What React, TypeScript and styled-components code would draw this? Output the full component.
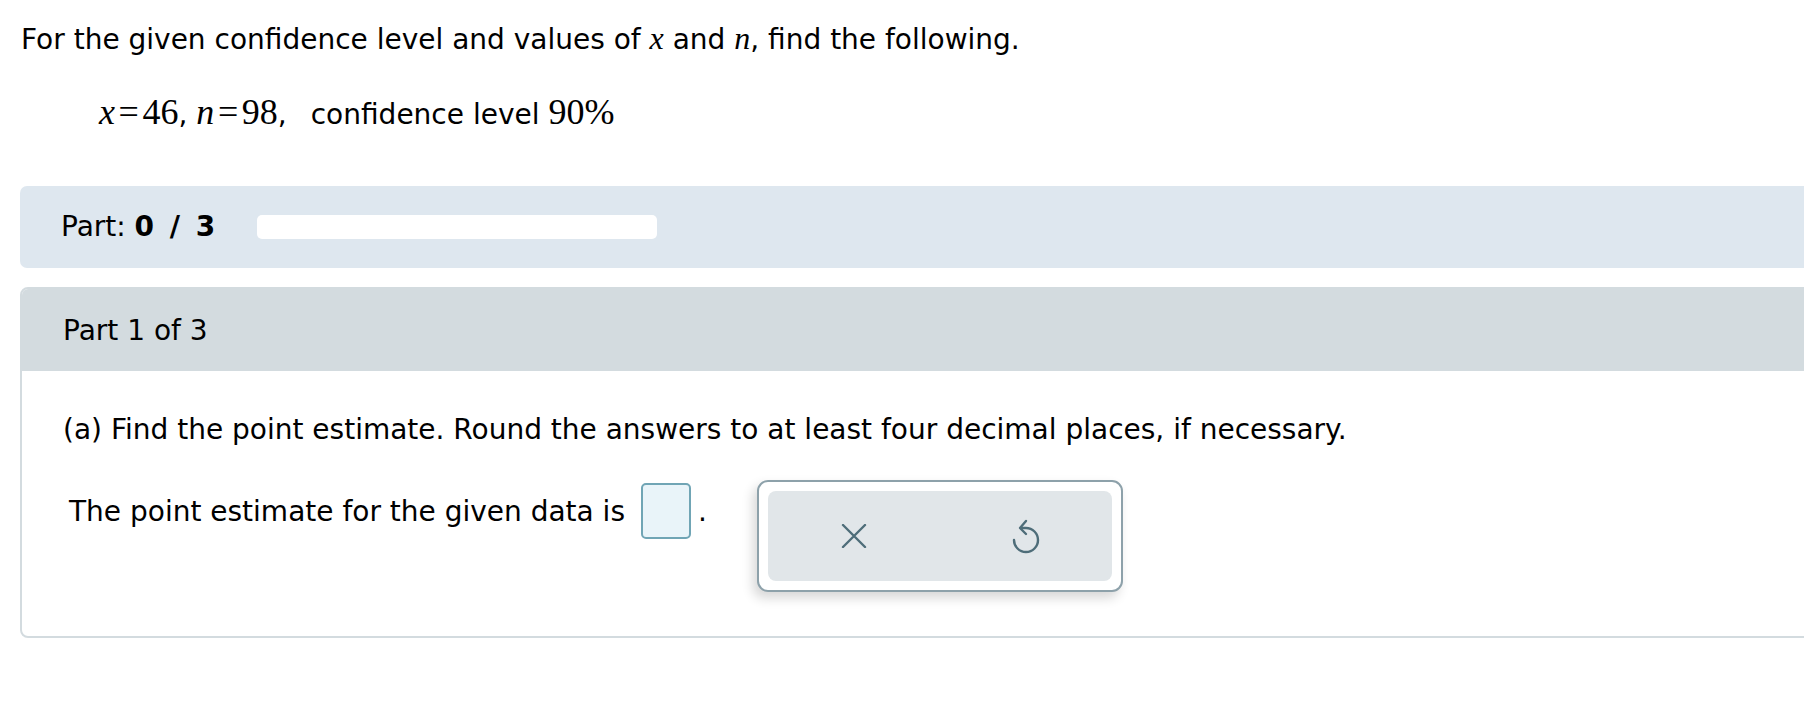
import React from "react";
import styled, { createGlobalStyle } from "styled-components";

const Global = createGlobalStyle`
  html, body { margin: 0; padding: 0; background: #ffffff; overflow: hidden; }
  body { font-family: "DejaVu Sans", Verdana, sans-serif; color: #000000; }
`;

const Page = styled.div`
  width: 1804px;
  box-sizing: border-box;
  padding: 22px 0 40px 20px;
  font-size: 28px;
`;

const Headline = styled.p`
  margin: 0;
  padding-left: 1px;
  height: 36px;
  line-height: 36px;
`;

const MathLine = styled.p`
  margin: 36px 0 0;
  padding-left: 79px;
  height: 40px;
  line-height: 40px;
`;

const Serif = styled.span<{ $italic?: boolean; $size?: number }>`
  font-family: "Liberation Serif", "Times New Roman", serif;
  font-size: ${(p) => p.$size ?? 31}px;
  font-style: ${(p) => (p.$italic ? "italic" : "normal")};
  line-height: 1;
`;

const Op = styled.span`
  font-family: "Liberation Serif", "Times New Roman", serif;
  font-size: 36px;
  line-height: 1;
  padding: 0 0.1em;
`;

const Words = styled.span`
  margin-left: 24px;
`;

const ProgressPanel = styled.section`
  margin: 52px -24px 0 0;
  height: 82px;
  background: #dee7ef;
  border-radius: 7px;
  display: flex;
  align-items: center;
  padding-left: 41px;
`;

const ProgressLabel = styled.div`
  line-height: 36px;
  white-space: pre;
`;

const Bold = styled.b`
  font-weight: 700;
  letter-spacing: 3px;
`;

const Bar = styled.div`
  margin-left: 39px;
  width: 400px;
  height: 24px;
  background: #ffffff;
  border-radius: 5px;
`;

const Card = styled.section`
  margin: 19px -24px 0 0;
  border: 2px solid #d3dbdf;
  border-radius: 8px;
  overflow: hidden;
`;

const CardHeader = styled.div`
  height: 82px;
  background: #d3dbdf;
  display: flex;
  align-items: center;
  padding-left: 41px;
`;

const CardBody = styled.div`
  padding: 41px 0 44px 41px;
`;

const Prompt = styled.p`
  margin: 0;
  line-height: 36px;
`;

const AnswerRow = styled.div`
  margin-top: 32px;
  display: flex;
  align-items: flex-start;
`;

const Question = styled.div`
  margin-top: 3px;
  padding-left: 6px;
  height: 56px;
  display: flex;
  align-items: center;
`;

const InputBox = styled.div`
  margin-left: 16px;
  width: 50px;
  height: 56px;
  box-sizing: border-box;
  border: 2px solid #70a5b5;
  background: #e9f4f9;
  border-radius: 5px;
`;

const Period = styled.span`
  margin-left: 7px;
`;

const ActionPanel = styled.div`
  margin-left: 50px;
  width: 366px;
  height: 112px;
  box-sizing: border-box;
  border: 2px solid #8da1aa;
  border-radius: 11px;
  padding: 9px;
  background: #ffffff;
  box-shadow: -4px 6px 12px rgba(0, 0, 0, 0.16);
`;

const ActionInner = styled.div`
  height: 100%;
  background: #e1e6e9;
  border-radius: 8px;
  display: grid;
  grid-template-columns: 1fr 1fr;
  align-items: center;
  justify-items: center;
`;

const IconButton = styled.button`
  border: 0;
  background: transparent;
  padding: 0;
  display: flex;
  align-items: center;
  justify-content: center;
  color: #4e6d79;
  cursor: pointer;
`;

const CloseIcon = () => (
  <svg width="26" height="24" viewBox="0 0 26 24" fill="none">
    <path d="M2 1 L24 23 M24 1 L2 23" stroke="currentColor" strokeWidth="2.4" strokeLinecap="round" />
  </svg>
);

const UndoIcon = () => (
  <svg width="28" height="35" viewBox="0 0 28 35" fill="none">
    <path
      d="M9 9 H14 A12 12 0 1 1 2 21"
      stroke="currentColor"
      strokeWidth="2.4"
      strokeLinecap="round"
      strokeLinejoin="round"
    />
    <path d="M14 2 L8 9 L14 15" stroke="currentColor" strokeWidth="2.4" strokeLinecap="round" strokeLinejoin="round" />
  </svg>
);

export default function App() {
  return (
    <>
      <Global />
      <Page>
        <Headline>
          For the given confidence level and values of <Serif $italic $size={32}>x</Serif> and{" "}
          <Serif $italic $size={32}>n</Serif>, find the following.
        </Headline>
        <MathLine>
          <Serif $italic $size={36}>x</Serif>
          <Op>=</Op>
          <Serif $size={36}>46</Serif>, <Serif $italic $size={36}>n</Serif>
          <Op>=</Op>
          <Serif $size={36}>98</Serif>,<Words>confidence level</Words> <Serif $size={36}>90%</Serif>
        </MathLine>
        <ProgressPanel>
          <ProgressLabel>
            Part: <Bold>0 / 3</Bold>
          </ProgressLabel>
          <Bar />
        </ProgressPanel>
        <Card>
          <CardHeader>Part 1 of 3</CardHeader>
          <CardBody>
            <Prompt>(a) Find the point estimate. Round the answers to at least four decimal places, if necessary.</Prompt>
            <AnswerRow>
              <Question>
                The point estimate for the given data is
                <InputBox />
                <Period>.</Period>
              </Question>
              <ActionPanel>
                <ActionInner>
                  <IconButton aria-label="clear">
                    <CloseIcon />
                  </IconButton>
                  <IconButton aria-label="undo">
                    <UndoIcon />
                  </IconButton>
                </ActionInner>
              </ActionPanel>
            </AnswerRow>
          </CardBody>
        </Card>
      </Page>
    </>
  );
}
